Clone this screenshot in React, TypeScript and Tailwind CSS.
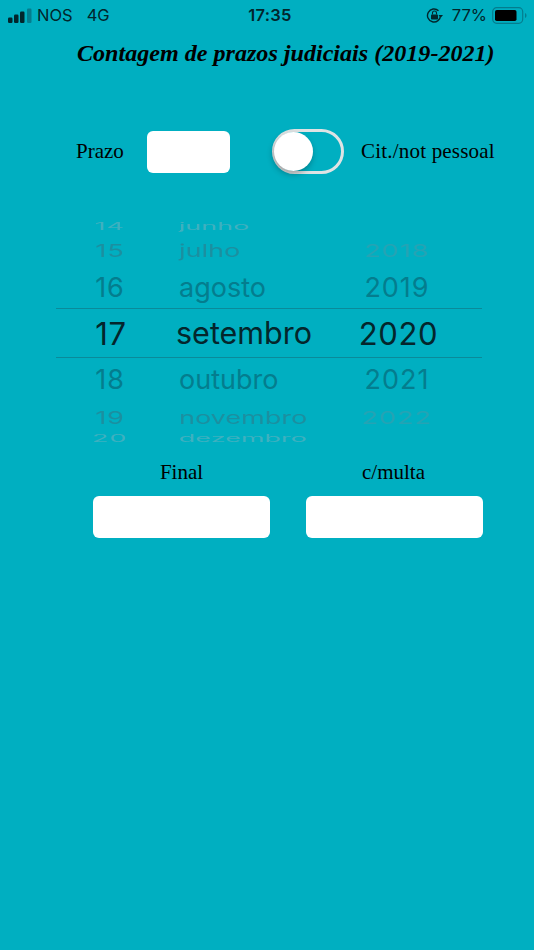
import React from 'react';

const serif = "font-['Liberation_Serif',serif]";
const sfLike = "font-['Inter',sans-serif]";

const rows = [
    {h: 'h-[12px] leading-[12px] pt-[1px]', scale: 'scale-y-[0.36] blur-[0.4px]', day: '14', month: 'junho', year: '', dayC: 'text-[#3fb0bf]', yearC: 'text-[#00afc1]'},
    {h: 'h-[36px] leading-none', scale: 'scale-y-[0.64]', day: '15', month: 'julho', year: '2018', dayC: 'text-[#1b8fa0]', yearC: 'text-[#25a3b4]'},
    {h: 'h-[40px] leading-none pb-[2px]', scale: 'scale-y-100', day: '16', month: 'agosto', year: '2019', dayC: 'text-[#047d8e]', yearC: 'text-[#047d8e]'},
];

const rowsBelow = [
    {h: 'h-[44px] leading-none pb-[2px]', scale: 'scale-y-100', day: '18', month: 'outubro', year: '2021', dayC: 'text-[#047d8e]', yearC: 'text-[#047d8e]'},
    {h: 'h-[30px] leading-none', scale: 'scale-y-[0.64]', day: '19', month: 'novembro', year: '2022', dayC: 'text-[#1b8fa0]', yearC: 'text-[#25a3b4]'},
    {h: 'h-[13px] leading-[13px]', scale: 'scale-y-[0.36] blur-[0.4px]', day: '20', month: 'dezembro', year: '', dayC: 'text-[#3fb0bf]', yearC: 'text-[#00afc1]'},
];

type Row = typeof rows[number];

const PickerRow = ({row}: {row: Row}) => (
    <div className={`flex items-center overflow-hidden text-[27px] ${row.h}`}>
        <div className="w-[110px] pr-[2px] flex justify-center">
            <span className={`tracking-[1px] ${row.scale} ${row.dayC}`}>{row.day}</span>
        </div>
        <div className="w-[190px] pl-[13px]">
            <span className={`inline-block ${row.scale} ${row.dayC}`}>{row.month}</span>
        </div>
        <div className="w-[85px] pr-[3px] flex justify-center">
            <span className={`tracking-[1px] ${row.scale} ${row.yearC}`}>{row.year}</span>
        </div>
    </div>
);

const StatusBar = () => (
    <div className={`flex items-center justify-between h-[30px] pl-2 pr-[7px] text-[16.5px] text-[#02262c] ${sfLike}`}>
        <div className="flex items-center w-[150px]">
            <svg width="24" height="15" viewBox="0 0 24 15">
                <rect x="0" y="9.500" width="4.500" height="5.500" rx="1.200" fill="#02262c"/>
                <rect x="6" y="6.500" width="4.500" height="8.500" rx="1.200" fill="#02262c"/>
                <rect x="12" y="3.500" width="4.500" height="11.500" rx="1.200" fill="#02262c"/>
                <rect x="19" y="0.500" width="4.500" height="14.500" rx="1.200" fill="#047d8e"/>
            </svg>
            <span className="ml-[5px]">NOS</span>
            <span className="ml-[14px]">4G</span>
        </div>
        <div className="font-semibold tracking-[0.3px]">17:35</div>
        <div className="flex items-center w-[145px] justify-end">
            <svg width="18" height="17" viewBox="0 0 18 17" fill="none">
                <path d="M14.500 8.500a6.500 6.500 0 1 1-2-4.700" stroke="#02262c" strokeWidth="1.400"/>
                <path d="M12.500 8h4.500l-2.200 2.800z" fill="#02262c"/>
                <rect x="5" y="7.500" width="7" height="5" rx="0.800" fill="#02262c"/>
                <path d="M6.500 7.500V6a2 2 0 0 1 4 0v1.500" stroke="#02262c" strokeWidth="1.100"/>
            </svg>
            <span className="ml-[8px]">77%</span>
            <svg className="ml-[5px]" width="35" height="17" viewBox="0 0 35 17" fill="none">
                <rect x="0.700" y="0.700" width="30" height="15.600" rx="4" stroke="#047d8e" strokeWidth="1.200"/>
                <rect x="3" y="3" width="21.500" height="11" rx="1.800" fill="#000"/>
                <path d="M33 6v5c1-.4 1.500-1.400 1.500-2.500S34 6.400 33 6z" fill="#047d8e"/>
            </svg>
        </div>
    </div>
);

const App = () => {
    return (
        <div className={`w-[534px] h-[950px] bg-[#00afc1] overflow-hidden ${serif}`}>
            <StatusBar/>
            <h1 className="mt-[8px] pl-[77px] text-[24.1px] leading-[30px] font-bold italic text-black whitespace-nowrap">
                Contagem de prazos judiciais (2019-2021)
            </h1>

            <div className="mt-[61px] flex items-center h-[45px] pl-[76px] text-[21px] text-black">
                <span className="w-[71px]">Prazo</span>
                <div className="mt-[1px] w-[83px] h-[42px] bg-white rounded-md"></div>
                <div className="ml-[42px] w-[72px] h-[45px] rounded-full border-[3px] border-[#dfe3e4] flex items-center">
                    <div className="-ml-[1px] w-[39px] h-[39px] rounded-full bg-white shadow-[-1px_3px_6px_rgba(0,0,0,0.3)]"></div>
                </div>
                <span className="ml-[17px] whitespace-nowrap tracking-[0.2px]">Cit./not pessoal</span>
            </div>

            <div className={`mt-[46px] ml-[56px] w-[426px] ${sfLike}`}>
                {rows.map(row => <PickerRow key={row.day} row={row}/>)}
                <div className="flex items-center h-[50px] border-y border-[#0a8a9a] leading-none text-[#04262c]">
                    <div className="w-[110px] text-center text-[31px] tracking-[0.7px]">17</div>
                    <div className="w-[190px] pl-[10px] text-[30.500px]">setembro</div>
                    <div className="w-[85px] text-center text-[31px] tracking-[0.7px]">2020</div>
                </div>
                {rowsBelow.map(row => <PickerRow key={row.day} row={row}/>)}
            </div>

            <div className="mt-[13px] flex pl-[93px] gap-[36px] text-[21px] text-black">
                <div className="w-[177px]">
                    <div className="text-center h-[38px] leading-[28px]">Final</div>
                    <div className="h-[42px] bg-white rounded-md"></div>
                </div>
                <div className="w-[177px]">
                    <div className="text-center h-[38px] leading-[28px] pr-[2px]">c/multa</div>
                    <div className="h-[42px] bg-white rounded-md"></div>
                </div>
            </div>
        </div>
    );
};

export default App;
